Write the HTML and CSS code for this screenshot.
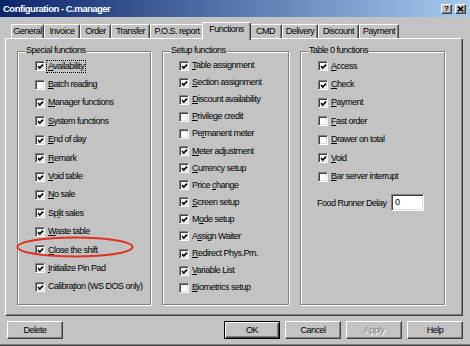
FILE: index.html
```html
<!DOCTYPE html>
<html>
<head>
<meta charset="utf-8">
<title>Configuration - C.manager</title>
<link rel="stylesheet" href="styles.css">
</head>
<body>
<div class="win">
  <div class="titlebar">
    <span class="title">Configuration - C.manager</span>
    <div class="capbtns">
      <span class="capbtn">?</span>
      <span class="capbtn"><svg class="xg" viewBox="0 0 7 6"><path d="M0.8 0.6L6.2 5.4M6.2 0.6L0.8 5.4"/></svg></span>
    </div>
  </div>

  <div class="tabs">
    <div class="tab t-gen">General</div>
    <div class="tab t-inv">Invoice</div>
    <div class="tab t-ord">Order</div>
    <div class="tab t-tra">Transfer</div>
    <div class="tab t-pos">P.O.S. report</div>
    <div class="tab t-fun sel">Functions</div>
    <div class="tab t-cmd">CMD</div>
    <div class="tab t-del">Delivery</div>
    <div class="tab t-dis">Discount</div>
    <div class="tab t-pay">Payment</div>
  </div>

  <div class="panel">
    <div class="grp g1">
      <div class="gtitle">Special functions</div>
      <div class="row"><span class="cb"><svg viewBox="0 0 7 7"><path d="M1 3.2L2.8 5L6 1.6"/></svg></span><span class="lbl focus"><u>A</u>vailability</span></div>
      <div class="row"><span class="cb"></span><span class="lbl"><u>B</u>atch reading</span></div>
      <div class="row"><span class="cb"><svg viewBox="0 0 7 7"><path d="M1 3.2L2.8 5L6 1.6"/></svg></span><span class="lbl"><u>M</u>anager functions</span></div>
      <div class="row"><span class="cb"><svg viewBox="0 0 7 7"><path d="M1 3.2L2.8 5L6 1.6"/></svg></span><span class="lbl"><u>S</u>ystem functions</span></div>
      <div class="row"><span class="cb"><svg viewBox="0 0 7 7"><path d="M1 3.2L2.8 5L6 1.6"/></svg></span><span class="lbl"><u>E</u>nd of day</span></div>
      <div class="row"><span class="cb"><svg viewBox="0 0 7 7"><path d="M1 3.2L2.8 5L6 1.6"/></svg></span><span class="lbl"><u>R</u>emark</span></div>
      <div class="row"><span class="cb"><svg viewBox="0 0 7 7"><path d="M1 3.2L2.8 5L6 1.6"/></svg></span><span class="lbl"><u>V</u>oid table</span></div>
      <div class="row"><span class="cb"><svg viewBox="0 0 7 7"><path d="M1 3.2L2.8 5L6 1.6"/></svg></span><span class="lbl"><u>N</u>o sale</span></div>
      <div class="row"><span class="cb"><svg viewBox="0 0 7 7"><path d="M1 3.2L2.8 5L6 1.6"/></svg></span><span class="lbl">Sp<u>l</u>it sales</span></div>
      <div class="row"><span class="cb"><svg viewBox="0 0 7 7"><path d="M1 3.2L2.8 5L6 1.6"/></svg></span><span class="lbl"><u>W</u>aste table</span></div>
      <div class="row"><span class="cb"><svg viewBox="0 0 7 7"><path d="M1 3.2L2.8 5L6 1.6"/></svg></span><span class="lbl"><u>C</u>lose the shift</span></div>
      <div class="row"><span class="cb"><svg viewBox="0 0 7 7"><path d="M1 3.2L2.8 5L6 1.6"/></svg></span><span class="lbl"><u>I</u>nitialize Pin Pad</span></div>
      <div class="row"><span class="cb"><svg viewBox="0 0 7 7"><path d="M1 3.2L2.8 5L6 1.6"/></svg></span><span class="lbl">Calibra<u>t</u>ion (WS DOS only)</span></div>
    </div>

    <div class="grp g2">
      <div class="gtitle">Setup functions</div>
      <div class="row"><span class="cb"><svg viewBox="0 0 7 7"><path d="M1 3.2L2.8 5L6 1.6"/></svg></span><span class="lbl"><u>T</u>able assignment</span></div>
      <div class="row"><span class="cb"><svg viewBox="0 0 7 7"><path d="M1 3.2L2.8 5L6 1.6"/></svg></span><span class="lbl"><u>S</u>ection assignment</span></div>
      <div class="row"><span class="cb"><svg viewBox="0 0 7 7"><path d="M1 3.2L2.8 5L6 1.6"/></svg></span><span class="lbl"><u>D</u>iscount availability</span></div>
      <div class="row"><span class="cb"></span><span class="lbl"><u>P</u>rivilege credit</span></div>
      <div class="row"><span class="cb"></span><span class="lbl">Pe<u>r</u>manent meter</span></div>
      <div class="row"><span class="cb"><svg viewBox="0 0 7 7"><path d="M1 3.2L2.8 5L6 1.6"/></svg></span><span class="lbl"><u>M</u>eter adjustment</span></div>
      <div class="row"><span class="cb"><svg viewBox="0 0 7 7"><path d="M1 3.2L2.8 5L6 1.6"/></svg></span><span class="lbl"><u>C</u>urrency setup</span></div>
      <div class="row"><span class="cb"><svg viewBox="0 0 7 7"><path d="M1 3.2L2.8 5L6 1.6"/></svg></span><span class="lbl">Price <u>c</u>hange</span></div>
      <div class="row"><span class="cb"><svg viewBox="0 0 7 7"><path d="M1 3.2L2.8 5L6 1.6"/></svg></span><span class="lbl"><u>S</u>creen setup</span></div>
      <div class="row"><span class="cb"><svg viewBox="0 0 7 7"><path d="M1 3.2L2.8 5L6 1.6"/></svg></span><span class="lbl">M<u>o</u>de setup</span></div>
      <div class="row"><span class="cb"><svg viewBox="0 0 7 7"><path d="M1 3.2L2.8 5L6 1.6"/></svg></span><span class="lbl">A<u>s</u>sign Waiter</span></div>
      <div class="row"><span class="cb"><svg viewBox="0 0 7 7"><path d="M1 3.2L2.8 5L6 1.6"/></svg></span><span class="lbl"><u>R</u>edirect Phys.Prn.</span></div>
      <div class="row"><span class="cb"><svg viewBox="0 0 7 7"><path d="M1 3.2L2.8 5L6 1.6"/></svg></span><span class="lbl"><u>V</u>ariable List</span></div>
      <div class="row"><span class="cb"></span><span class="lbl"><u>B</u>iometrics setup</span></div>
    </div>

    <div class="grp g3">
      <div class="gtitle">Table 0 functions</div>
      <div class="row"><span class="cb"><svg viewBox="0 0 7 7"><path d="M1 3.2L2.8 5L6 1.6"/></svg></span><span class="lbl"><u>A</u>ccess</span></div>
      <div class="row"><span class="cb"><svg viewBox="0 0 7 7"><path d="M1 3.2L2.8 5L6 1.6"/></svg></span><span class="lbl"><u>C</u>heck</span></div>
      <div class="row"><span class="cb"><svg viewBox="0 0 7 7"><path d="M1 3.2L2.8 5L6 1.6"/></svg></span><span class="lbl"><u>P</u>ayment</span></div>
      <div class="row"><span class="cb"></span><span class="lbl"><u>F</u>ast order</span></div>
      <div class="row"><span class="cb"></span><span class="lbl"><u>D</u>rawer on total</span></div>
      <div class="row"><span class="cb"><svg viewBox="0 0 7 7"><path d="M1 3.2L2.8 5L6 1.6"/></svg></span><span class="lbl"><u>V</u>oid</span></div>
      <div class="row"><span class="cb"></span><span class="lbl"><u>B</u>ar server interrupt</span></div>
      <div class="frow"><span class="flbl">Food Runner Delay</span><span class="inp">0</span></div>
    </div>
  </div>

  <div class="btns">
    <div class="btn">Delete</div>
    <div class="btn def">OK</div>
    <div class="btn">Cancel</div>
    <div class="btn dis">Apply</div>
    <div class="btn">Help</div>
  </div>

  <svg class="ring" viewBox="0 0 122 24"><ellipse cx="61" cy="12" rx="57.5" ry="9.5"/></svg>
</div>
</body>
</html>
```

FILE: styles.css
```css
* { box-sizing: border-box; }
html, body { margin: 0; padding: 0; }
body {
  width: 470px;
  height: 346px;
  overflow: hidden;
  background: #c3c3c3;
  font-family: "Liberation Sans", Arial, sans-serif;
  font-size: 9px;
  letter-spacing: -0.5px;
  color: #000;
}
.win {
  position: relative;
  width: 470px;
  height: 346px;
  background: #c3c3c3;
  border-bottom: 1px solid #404040;
  box-shadow: inset 0 -1px 0 #808080;
}

/* title bar */
.titlebar {
  height: 17px;
  display: flex;
  align-items: center;
  justify-content: space-between;
  padding: 0 4px 0 3px;
  background: linear-gradient(to right, #0a246a, #a6caf0);
  color: #fff;
}
.title {
  font-weight: bold;
  font-size: 9.5px;
  letter-spacing: -0.5px;
  line-height: 17px;
}
.capbtns { display: flex; gap: 3px; }
.capbtn {
  width: 11px;
  height: 10px;
  background: #c3c3c3;
  border-top: 1px solid #fff;
  border-left: 1px solid #fff;
  border-right: 1px solid #404040;
  border-bottom: 1px solid #404040;
  box-shadow: inset -1px -1px 0 #808080;
  display: flex;
  align-items: center;
  justify-content: center;
  color: #000;
  font-weight: bold;
  font-size: 8px;
  line-height: 8px;
  letter-spacing: 0;
}
.xg { width: 7px; height: 6px; display: block; }
.xg path { stroke: #000; stroke-width: 1.5; fill: none; }

/* tabs */
.tabs {
  position: relative;
  z-index: 2;
  display: flex;
  align-items: flex-start;
  height: 16px;
  margin-top: 5px;
  padding-left: 11px;
}
.tab {
  height: 14px;
  margin-top: 2px;
  line-height: 13px;
  text-align: center;
  white-space: nowrap;
  background: #c3c3c3;
  border-top: 1px solid #fff;
  border-left: 1px solid #fff;
  border-right: 1px solid #404040;
  border-radius: 2px 2px 0 0;
  box-shadow: inset -1px 0 0 #808080;
}
.tab.sel {
  position: relative;
  z-index: 1;
  height: 18px;
  margin: 0 -2px;
  line-height: 13px;
}
.t-gen { width: 33px; }
.t-inv { width: 36px; }
.t-ord { width: 31px; }
.t-tra { width: 39px; }
.t-pos { width: 54px; }
.t-fun { width: 49px; }
.t-cmd { width: 33px; }
.t-del { width: 36px; }
.t-dis { width: 41px; }
.t-pay { width: 40px; }

/* panel */
.panel {
  position: relative;
  z-index: 1;
  display: flex;
  gap: 11px;
  width: 458px;
  height: 278px;
  margin-left: 5px;
  padding: 12px 0 0 11px;
  border-top: 1px solid #fff;
  border-left: 1px solid #fff;
  border-right: 1px solid #404040;
  border-bottom: 1px solid #404040;
  box-shadow: inset -1px -1px 0 #808080;
}
.grp {
  height: 254px;
  border: 1px solid #808080;
  box-shadow: 1px 1px 0 #fff, inset 1px 1px 0 #fff;
}
.g1 { width: 134px; }
.g2 { width: 127px; }
.g3 { width: 145px; }
.gtitle {
  width: max-content;
  margin: -7px 0 1px 7px;
  padding: 0 1px;
  line-height: 11px;
  background: #c3c3c3;
}
.row {
  display: flex;
  align-items: center;
  height: 18.4px;
  padding-left: 17px;
  line-height: 11px;
  white-space: nowrap;
}
.g2 .row { height: 17.1px; padding-left: 16px; }
.cb {
  flex: none;
  width: 10px;
  height: 10px;
  margin-right: 3px;
  padding: 1px 0 0 1px;
  background: #fff;
  border-top: 1px solid #808080;
  border-left: 1px solid #808080;
  border-right: 1px solid #fff;
  border-bottom: 1px solid #fff;
  box-shadow: inset 1px 1px 0 #404040, inset -1px -1px 0 #dcdcdc;
}
.cb svg { display: block; width: 7px; height: 7px; }
.cb path { fill: none; stroke: #000; stroke-width: 1.7; }
.lbl { display: block; }
.focus {
  outline: 1px dotted #000;
  padding: 0 1px;
  margin-left: -1px;
}
u { text-decoration: underline; }

.frow {
  display: flex;
  align-items: center;
  height: 18px;
  margin-top: 8px;
  padding-left: 16px;
}
.flbl { width: 74px; white-space: nowrap; }
.inp {
  width: 33px;
  height: 17px;
  padding-left: 3px;
  line-height: 15px;
  background: #fff;
  border-top: 1px solid #808080;
  border-left: 1px solid #808080;
  border-right: 1px solid #fff;
  border-bottom: 1px solid #fff;
  box-shadow: inset 1px 1px 0 #404040, inset -1px -1px 0 #dcdcdc;
}

/* buttons */
.btns {
  display: flex;
  gap: 5px;
  margin-top: 5px;
  padding: 0 7px;
}
.btn {
  width: 56px;
  height: 18px;
  line-height: 16px;
  text-align: center;
  background: #c3c3c3;
  border-top: 1px solid #fff;
  border-left: 1px solid #fff;
  border-right: 1px solid #404040;
  border-bottom: 1px solid #404040;
  box-shadow: inset -1px -1px 0 #808080;
}
.btn.def {
  margin-left: auto;
  border: 1px solid #000;
  box-shadow: inset 1px 1px 0 #fff, inset -1px -1px 0 #404040, inset -2px -2px 0 #808080;
}
.btn.dis {
  color: #808080;
  text-shadow: 1px 1px 0 #fff;
}

/* annotation */
.ring {
  position: absolute;
  left: 14px;
  top: 235px;
  width: 122px;
  height: 24px;
  z-index: 5;
}
.ring ellipse { fill: none; stroke: #e2301f; stroke-width: 2; }
```
